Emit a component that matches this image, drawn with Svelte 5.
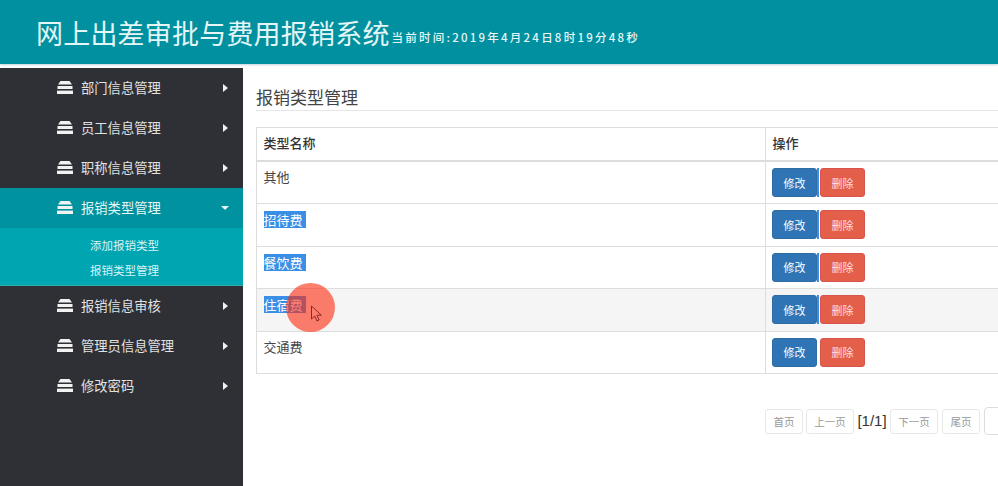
<script>
  const menus = [
    { name: '部门信息管理' },
    { name: '员工信息管理' },
    { name: '职称信息管理' },
    { name: '报销类型管理', open: true, subs: ['添加报销类型', '报销类型管理'] },
    { name: '报销信息审核' },
    { name: '管理员信息管理' },
    { name: '修改密码' }
  ];

  const rows = [
    { name: '其他' },
    { name: '招待费', selected: true },
    { name: '餐饮费', selected: true },
    { name: '住宿费', selected: true, hover: true },
    { name: '交通费' }
  ];
</script>

<div class="page">
  <header class="top">
    <h1>网上出差审批与费用报销系统</h1>
    <span class="clock">当前时间:2019年4月24日8时19分48秒</span>
  </header>

  <div class="body">
    <aside class="side">
      {#each menus as m}
        <div class="item" class:open={m.open}>
          <svg class="stack" width="16" height="13" viewBox="0 0 16 13">
            <path d="M3.500 0h9L15 3.600H1z" fill="#f2f2f2" />
            <path d="M.5 5h15v3H.5z" fill="#f2f2f2" />
            <path d="M0 9.600h16v3.400H0z" fill="#f2f2f2" />
          </svg>
          <span class="label">{m.name}</span>
          {#if m.open}
            <span class="caret-down"></span>
          {:else}
            <span class="caret-right"></span>
          {/if}
        </div>
        {#if m.subs}
          <div class="subs">
            {#each m.subs as s}
              <div class="sub">{s}</div>
            {/each}
          </div>
        {/if}
      {/each}
    </aside>

    <main class="main">
      <h2>报销类型管理</h2>

      <table>
        <thead>
          <tr>
            <th class="c1">类型名称</th>
            <th>操作</th>
          </tr>
        </thead>
        <tbody>
          {#each rows as r}
            <tr class:hover={r.hover}>
              <td class="c1"><span class:sel={r.selected}>{r.name}</span></td>
              <td class="ops">
                <button class="btn blue">修改</button><span class="gap" class:gapsel={r.selected || r.name === '其他'}></span><button class="btn red">删除</button>
              </td>
            </tr>
          {/each}
        </tbody>
      </table>

      <div class="pager">
        <span class="pg">首页</span>
        <span class="pg wide">上一页</span>
        <span class="count">[1/1]</span>
        <span class="pg wide">下一页</span>
        <span class="pg last">尾页</span>
        <span class="box"></span>
      </div>

      <div class="pointer">
        <svg width="14" height="18" viewBox="0 0 14 18">
          <path d="M1.500 1v13l3.200-3 2.200 5 2.200-1-2.200-4.800h4.400z" fill="#ff7f6e" stroke="#8c2a20" stroke-width="1" />
        </svg>
      </div>
    </main>
  </div>
</div>

<style>
  :global(body) {
    margin: 0;
    background: #fff;
  }

  .page {
    width: 998px;
    height: 486px;
    overflow: hidden;
    display: flex;
    flex-direction: column;
    font-family: "Noto Sans CJK SC", "Liberation Sans", sans-serif;
    color: #333;
  }

  .top {
    height: 64px;
    flex-shrink: 0;
    background: #00909f;
    box-shadow: 0 1px 2px rgba(0, 70, 90, 0.25);
    padding: 14px 0 0 36px;
    box-sizing: border-box;
    display: flex;
    align-items: baseline;
    color: #e4f6f7;
  }

  .top h1 {
    margin: 0;
    font-size: 27px;
    font-weight: 400;
    line-height: 38px;
    letter-spacing: 0.2px;
  }

  .clock {
    font-size: 11.500px;
    font-weight: 500;
    letter-spacing: 2.230px;
    margin-left: 2px;
    position: relative;
    top: -2px;
  }

  .body {
    flex: 1;
    display: flex;
    padding-top: 4px;
    min-height: 0;
  }

  /* sidebar */
  .side {
    width: 243px;
    flex-shrink: 0;
    background: #2f3036;
  }

  .item {
    height: 40px;
    display: flex;
    align-items: center;
    padding: 0 15px 1px 57px;
    box-sizing: border-box;
    color: #e2e2e2;
    font-size: 13.300px;
  }

  .item.open {
    background: #00929f;
    color: #e4f6f7;
  }

  .stack {
    flex-shrink: 0;
    margin-right: 8px;
  }

  .label {
    flex: 1;
  }

  .caret-right {
    width: 0;
    height: 0;
    border-left: 5px solid #f2f2f2;
    border-top: 4px solid transparent;
    border-bottom: 4px solid transparent;
  }

  .caret-down {
    width: 0;
    height: 0;
    border-top: 4px solid #e4f6f7;
    border-left: 4px solid transparent;
    border-right: 4px solid transparent;
    margin-right: -1px;
  }

  .subs {
    height: 58px;
    background: #00a5b2;
    box-sizing: border-box;
    padding-top: 4.500px;
    border-bottom: 1px solid #3aa;
  }

  .sub {
    height: 25px;
    line-height: 25px;
    padding-left: 90px;
    font-size: 11.500px;
    color: #d8f3f4;
  }

  /* content */
  .main {
    position: relative;
    flex: 1;
    min-width: 0;
    padding-left: 13px;
  }

  h2 {
    margin: 0;
    height: 43px;
    box-sizing: border-box;
    border-bottom: 1px solid #e6e6e6;
    font-size: 17px;
    font-weight: 400;
    line-height: 24px;
    padding-top: 17px;
    color: #444;
  }

  table {
    margin-top: 16px;
    width: 760px;
    border-collapse: collapse;
    table-layout: fixed;
    font-size: 13px;
  }

  th, td {
    border: 1px solid #ddd;
    padding: 0 6.500px;
    text-align: left;
    vertical-align: top;
  }

  th {
    height: 32px;
    border-bottom-width: 2px;
    font-weight: 500;
    line-height: 30px;
    color: #333;
  }

  .c1 {
    width: 495px;
  }

  td {
    height: 42.500px;
    box-sizing: border-box;
    line-height: 18px;
    padding-top: 6px;
    color: #444;
  }

  tr.hover td {
    background: #f5f5f5;
  }

  .sel {
    background: #3a8ee6;
    color: #fff;
    display: inline-block;
    line-height: 17px;
    padding-right: 3px;
    margin-top: 1px;
  }

  td.ops {
    padding: 6px 0 0 6px;
  }

  .ops > * {
    vertical-align: top;
  }

  .btn {
    height: 29px;
    padding: 0;
    font: inherit;
    font-size: 11px;
    color: #fff;
    border-radius: 3px;
    border: 1px solid transparent;
    box-sizing: border-box;
  }

  .blue {
    width: 45px;
    background: #2f74b5;
    border-color: #2e6da4;
  }

  .red {
    width: 45px;
    background: #e35f49;
    border-color: #d9534f;
    color: #fde;
  }

  .gap {
    display: inline-block;
    width: 3px;
    height: 29px;
  }

  .gapsel {
    background: linear-gradient(90deg, #3a8ee6 0, #3a8ee6 2px, transparent 2px);
  }

  .pager {
    display: flex;
    align-items: center;
    margin-top: 33px;
    padding-left: 509px;
    gap: 3px;
    font-size: 10.500px;
    color: #999;
    white-space: nowrap;
  }

  .pg {
    flex-shrink: 0;
    width: 38px;
    height: 25px;
    line-height: 24px;
    box-sizing: border-box;
    text-align: center;
    border: 1px solid #e8e8e8;
    border-radius: 3px;
  }

  .pg.wide {
    width: 48px;
  }

  .pg.last {
    margin-left: 1px;
  }

  .count {
    flex-shrink: 0;
    font-size: 15px;
    color: #333;
    font-family: "Liberation Sans", sans-serif;
    width: 30px;
    text-align: center;
    position: relative;
    top: -1px;
  }

  .box {
    flex-shrink: 0;
    width: 60px;
    height: 28px;
    margin-left: 1px;
    border: 1px solid #ddd;
    border-radius: 4px;
    box-sizing: border-box;
  }

  /* screen-recording cursor highlight */
  .pointer {
    position: absolute;
    left: 43px;
    top: 215px;
    width: 49px;
    height: 49px;
    border-radius: 50%;
    background: rgba(255, 42, 13, 0.6);
    display: flex;
    align-items: center;
    justify-content: center;
  }

  .pointer svg {
    position: relative;
    left: 6px;
    top: 6px;
  }
</style>
